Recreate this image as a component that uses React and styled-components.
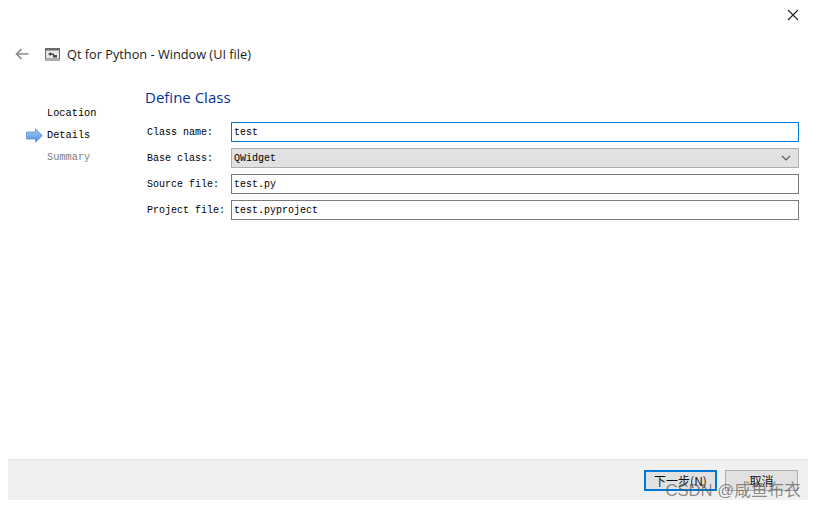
import React from "react";
import styled, { createGlobalStyle } from "styled-components";

const Global = createGlobalStyle`
  html, body { margin: 0; padding: 0; background: #fff; }
  #root { width: 816px; height: 508px; overflow: hidden; }
`;

const Page = styled.div`
  width: 816px;
  height: 508px;
  display: flex;
  flex-direction: column;
  background: #fff;
  position: relative;
`;

const TopBar = styled.div`
  height: 30px;
  display: flex;
  justify-content: flex-end;
  align-items: center;
  padding-right: 17px;
`;

const CloseIcon = styled.svg`
  width: 12px;
  height: 12px;
  display: block;
`;

const Header = styled.div`
  height: 18px;
  margin-top: 15px;
  display: flex;
  align-items: center;
  padding-left: 15px;
`;

const BackIcon = styled.svg`
  width: 14px;
  height: 12px;
  display: block;
  margin-right: 16px;
`;

const WindowIcon = styled.svg`
  width: 15px;
  height: 13px;
  display: block;
  margin-right: 7px;
`;

const Title = styled.span`
  font: 12.75px/18px "Open Sans", "Noto Sans", sans-serif;
  color: #1a1a1a;
`;

const Main = styled.div`
  flex: 1;
  display: flex;
  padding-top: 24px;
`;

const Steps = styled.div`
  width: 145px;
  flex: none;
  display: flex;
  flex-direction: column;
  gap: 5px;
  padding: 18px 0 0 26px;
  box-sizing: border-box;
`;

const Step = styled.div`
  height: 17px;
  display: flex;
  align-items: center;
  font: 10.3px/17px "Liberation Mono", monospace;
  color: ${(p) => (p.$muted ? "#808080" : "#000")};
  padding-left: ${(p) => (p.$active ? 0 : 21)}px;
`;

const StepArrow = styled.svg`
  width: 17px;
  height: 15px;
  margin-right: 4px;
  display: block;
`;

const Form = styled.div`
  flex: 1;
  padding-right: 17px;
`;

const Heading = styled.h1`
  margin: 0 0 15px;
  font: 400 15px/20px "Open Sans", "Noto Sans", sans-serif;
  color: #003399;
`;

const Fields = styled.div`
  display: flex;
  flex-direction: column;
  gap: 6px;
`;

const Row = styled.div`
  display: flex;
  align-items: flex-start;
  padding-left: 1px;
`;

const Label = styled.label`
  width: 85px;
  height: 20px;
  flex: none;
  padding: 1px 0 0 1px;
  box-sizing: border-box;
  font: 10px/19px "Liberation Mono", monospace;
  color: #000;
`;

const Field = styled.div`
  flex: 1;
  height: 20px;
  box-sizing: border-box;
  border: 1px solid ${(p) => (p.$focus ? "#0078d7" : "#7a7a7a")};
  padding: 0 2px;
  font: 10px/19px "Liberation Mono", monospace;
  color: #000;
  background: #fff;
`;

const Combo = styled(Field)`
  display: flex;
  align-items: center;
  justify-content: space-between;
  background: #e1e1e1;
  border-color: #adadad;
`;

const Chevron = styled.svg`
  width: 10px;
  height: 6px;
  margin-right: 5px;
  display: block;
`;

const Footer = styled.div`
  height: 41px;
  margin: 0 8px 8px;
  background: #f0f0f0;
  border-top: 1px solid #dfdfdf;
  box-sizing: border-box;
  display: flex;
  align-items: flex-start;
  justify-content: flex-end;
  gap: 8px;
  padding: 10px 10px 0 0;
`;

const Button = styled.button`
  width: 73px;
  height: 21px;
  box-sizing: border-box;
  padding: 0;
  background: #e1e1e1;
  border: ${(p) => (p.$primary ? "2px solid #0078d7" : "1px solid #adadad")};
  font: 12px/17px "Noto Sans CJK SC", "Liberation Mono", monospace;
  color: #111;
`;

const Watermark = styled.div`
  position: absolute;
  right: 15px;
  top: 481px;
  font: 16.7px/20px "Liberation Sans", "Noto Sans CJK SC", sans-serif;
  color: rgba(85, 85, 85, 0.66);
  white-space: nowrap;
`;

export default function App() {
  return (
    <Page>
      <Global />
      <TopBar>
        <CloseIcon viewBox="0 0 12 12">
          <path d="M1 1 L11 11 M11 1 L1 11" stroke="#222" strokeWidth="1.1" fill="none" />
        </CloseIcon>
      </TopBar>
      <Header>
        <BackIcon viewBox="0 0 14 12">
          <path d="M13.5 6 H2 M6.5 1 L1.5 6 L6.5 11" stroke="#8a8a8a" strokeWidth="1.7" fill="none" />
        </BackIcon>
        <WindowIcon viewBox="0 0 15 13">
          <rect x="0.5" y="0.5" width="14" height="10.5" fill="#e8e8e8" stroke="#6a6a6a" />
          <rect x="1" y="1" width="13" height="1.5" fill="#6a6a6a" />
          <path d="M3 6 L6 4 V8 Z M6 5.5 H9 V7 H6 Z M8 7 H12 V9.5 H8 Z" fill="#444" />
          <path d="M0 12.5 H15" stroke="#aaa" />
        </WindowIcon>
        <Title>Qt for Python - Window (UI file)</Title>
      </Header>
      <Main>
        <Steps>
          <Step>Location</Step>
          <Step $active>
            <StepArrow viewBox="0 0 17 15">
              <defs>
                <linearGradient id="arrowFill" x1="0" y1="0" x2="0" y2="1">
                  <stop offset="0" stopColor="#a9cdf3" />
                  <stop offset="1" stopColor="#4a8ee0" />
                </linearGradient>
              </defs>
              <path d="M0.5 4 H9.5 V0.8 L16.3 7.5 L9.5 14.2 V11 H0.5 Z" fill="url(#arrowFill)" stroke="#5f93cf" strokeWidth="0.8" />
            </StepArrow>
            Details
          </Step>
          <Step $muted>Summary</Step>
        </Steps>
        <Form>
          <Heading>Define Class</Heading>
          <Fields>
            <Row>
              <Label>Class name:</Label>
              <Field $focus>test</Field>
            </Row>
            <Row>
              <Label>Base class:</Label>
              <Combo>
                QWidget
                <Chevron viewBox="0 0 10 6">
                  <path d="M1 1 L5 5 L9 1" stroke="#555" strokeWidth="1.1" fill="none" />
                </Chevron>
              </Combo>
            </Row>
            <Row>
              <Label>Source file:</Label>
              <Field>test.py</Field>
            </Row>
            <Row>
              <Label>Project file:</Label>
              <Field>test.pyproject</Field>
            </Row>
          </Fields>
        </Form>
      </Main>
      <Footer>
        <Button $primary>下一步(N)</Button>
        <Button>取消</Button>
      </Footer>
      <Watermark>CSDN @咸鱼布衣</Watermark>
    </Page>
  );
}
